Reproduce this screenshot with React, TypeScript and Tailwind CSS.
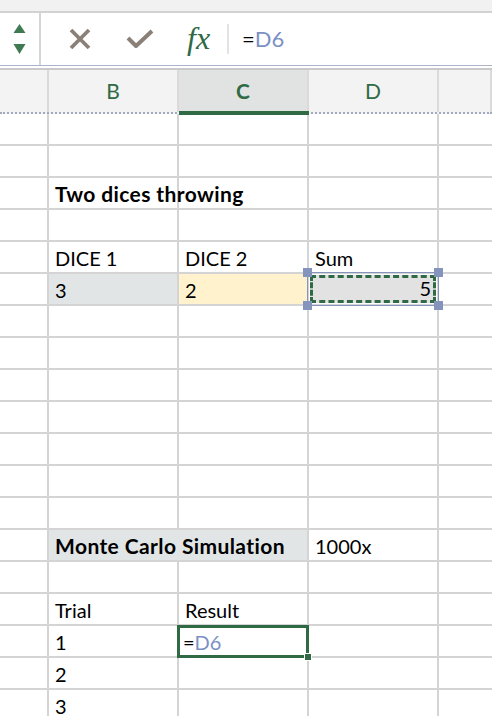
import React from "react";

type Cell = {
  text?: React.ReactNode;
  bold?: boolean;
  align?: "left" | "right";
  bg?: string;
};

const COLS = ["w-[49px]", "w-[130px]", "w-[130px]", "w-[130px]", "flex-1"];

const rows: Record<number, Record<number, Cell>> = {
  2: { 1: { text: "Two dices throwing", bold: true } },
  4: { 1: { text: "DICE 1" }, 2: { text: "DICE 2" }, 3: { text: "Sum" } },
  5: {
    1: { text: "3", bg: "bg-[#e1e5e6]" },
    2: { text: "2", bg: "bg-[#fff2cc]" },
  },
  13: { 3: { text: "1000x" } },
  15: { 1: { text: "Trial" }, 2: { text: "Result" } },
  16: { 1: { text: "1" } },
  17: { 1: { text: "2" } },
  18: { 1: { text: "3" } },
};

function XIcon() {
  return (
    <svg width="22" height="22" viewBox="0 0 22 22">
      <path d="M2 2 L20 20 M20 2 L2 20" stroke="#8a8078" strokeWidth="3.8" />
    </svg>
  );
}

function CheckIcon() {
  return (
    <svg width="28" height="22" viewBox="0 0 28 22">
      <path d="M2 10 L10 18 L26 3" stroke="#8a8078" strokeWidth="4" fill="none" strokeLinejoin="round" />
    </svg>
  );
}

function Arrows() {
  return (
    <svg width="13" height="32" viewBox="0 0 13 32">
      <path d="M6.5 1 L12.5 10 L0.5 10 Z" fill="#3f7a52" />
      <path d="M0.5 21 L12.5 21 L6.5 31 Z" fill="#3f7a52" />
    </svg>
  );
}

function FormulaBar() {
  return (
    <div className="h-[53px] bg-white flex items-center border-b border-[#aab3cc]">
      <div className="w-[41px] h-full flex items-center justify-center border-r-2 border-[#d6d6d6]">
        <Arrows />
      </div>
      <div className="flex items-center pl-[28px] gap-[35px]">
        <XIcon />
        <CheckIcon />
      </div>
      <span className="ml-[33px] text-[#2f6a45] italic text-[32px] leading-none font-['Liberation_Serif',serif] mt-[-2px]">
        fx
      </span>
      <div className="w-[2px] h-[30px] bg-[#e3e3e3] ml-[17px]" />
      <span className="ml-[13px] text-[22px] leading-none font-['Lato',sans-serif]">
        <span className="text-black">=</span>
        <span className="text-[#7b91c5]">D6</span>
      </span>
    </div>
  );
}

function HeaderRow() {
  const letters = ["", "B", "C", "D", ""];
  return (
    <div className="flex h-[44px] border-b-2 border-dotted border-[#a3aac0] bg-[#f3f3f3]">
      {letters.map((l, i) => (
        <div
          key={i}
          className={`${COLS[i]} relative flex items-center justify-center border-r-2 border-[#dadada] text-[#2f6a45] text-[21px] font-['Lato',sans-serif] ${
            i === 2 ? "bg-[#e1e3e3] font-bold" : ""
          } ${i === 4 ? "border-r-0" : ""}`}
        >
          {l}
          {i === 2 && <div className="absolute left-0 right-[-2px] bottom-[-3px] h-[4px] bg-[#2f6a45]" />}
        </div>
      ))}
    </div>
  );
}

function GridRow({ r }: { r: number }) {
  const cells = rows[r] || {};
  if (r === 13) {
    return (
      <div className="flex h-[32px]">
        <div className={`${COLS[0]} border-r-2 border-b-2 border-[#d4d4d4]`} />
        <div className="w-[260px] bg-[#e1e5e6] border-r-2 border-b-2 border-[#d4d4d4] flex items-end pl-[6px] text-[21px] tracking-[0.4px] font-bold leading-[28px] text-black">
          Monte Carlo Simulation
        </div>
        <Plain cell={cells[3]} i={3} />
        <Plain cell={undefined} i={4} />
      </div>
    );
  }
  return (
    <div className="flex h-[32px]">
      {COLS.map((_, i) => {
        if (r === 5 && i === 3) return <SumCell key={i} />;
        if (r === 16 && i === 2) return <ActiveCell key={i} />;
        return <Plain key={i} cell={cells[i]} i={i} />;
      })}
    </div>
  );
}

function Plain({ cell, i }: { cell?: Cell; i: number }) {
  return (
    <div
      className={`${COLS[i]} border-b-2 border-[#d4d4d4] ${i < 4 ? "border-r-2" : ""} ${
        cell?.bg ?? ""
      } flex items-end pl-[6px] leading-[28px] text-black whitespace-nowrap ${
        cell?.bold ? "font-bold text-[21px] tracking-[0.4px]" : "text-[20px]"
      }`}
    >
      {cell?.text}
    </div>
  );
}

function SumCell() {
  return (
    <div className="w-[130px] relative border-r-2 border-b-2 border-[#d4d4d4]">
      <div className="absolute left-[-2px] top-[-2px] right-[-2px] bottom-[-2px] border border-[#8594bd]">
        <div className="absolute inset-[2px] border-[3px] border-dashed border-[#2f6a45] bg-[#e2e2e2] flex items-end justify-end pr-[2px] text-[20px] leading-[24px] text-black">
          5
        </div>
      </div>
      <div className="absolute left-[-6px] top-[-6px] w-[9px] h-[9px] bg-[#8594bd]" />
      <div className="absolute right-[-6px] top-[-6px] w-[9px] h-[9px] bg-[#8594bd]" />
      <div className="absolute left-[-6px] bottom-[-6px] w-[9px] h-[9px] bg-[#8594bd]" />
      <div className="absolute right-[-6px] bottom-[-6px] w-[9px] h-[9px] bg-[#8594bd]" />
    </div>
  );
}

function ActiveCell() {
  return (
    <div className="w-[130px] relative border-r-2 border-b-2 border-[#d4d4d4]">
      <div className="absolute left-[-2px] top-[-1px] right-[-2px] bottom-[-2px] border-[3px] border-[#2f6a45] bg-white flex items-end pl-[3px] text-[20px] leading-[25px]">
        <span className="text-black">=</span>
        <span className="text-[#7b91c5]">D6</span>
      </div>
      <div className="absolute right-[-5px] bottom-[-5px] w-[8px] h-[8px] bg-[#2f6a45] border border-white" />
    </div>
  );
}

export default function App() {
  return (
    <div className="w-[492px] h-[716px] overflow-hidden bg-white font-['Lato',sans-serif]">
      <div className="h-[13px] bg-[#f1f1f1] border-b-2 border-[#d2d2d2]" />
      <FormulaBar />
      <div className="h-[4px] bg-white border-b-2 border-[#c9c9c9]" />
      <HeaderRow />
      {Array.from({ length: 19 }, (_, r) => (
        <GridRow key={r} r={r} />
      ))}
    </div>
  );
}
